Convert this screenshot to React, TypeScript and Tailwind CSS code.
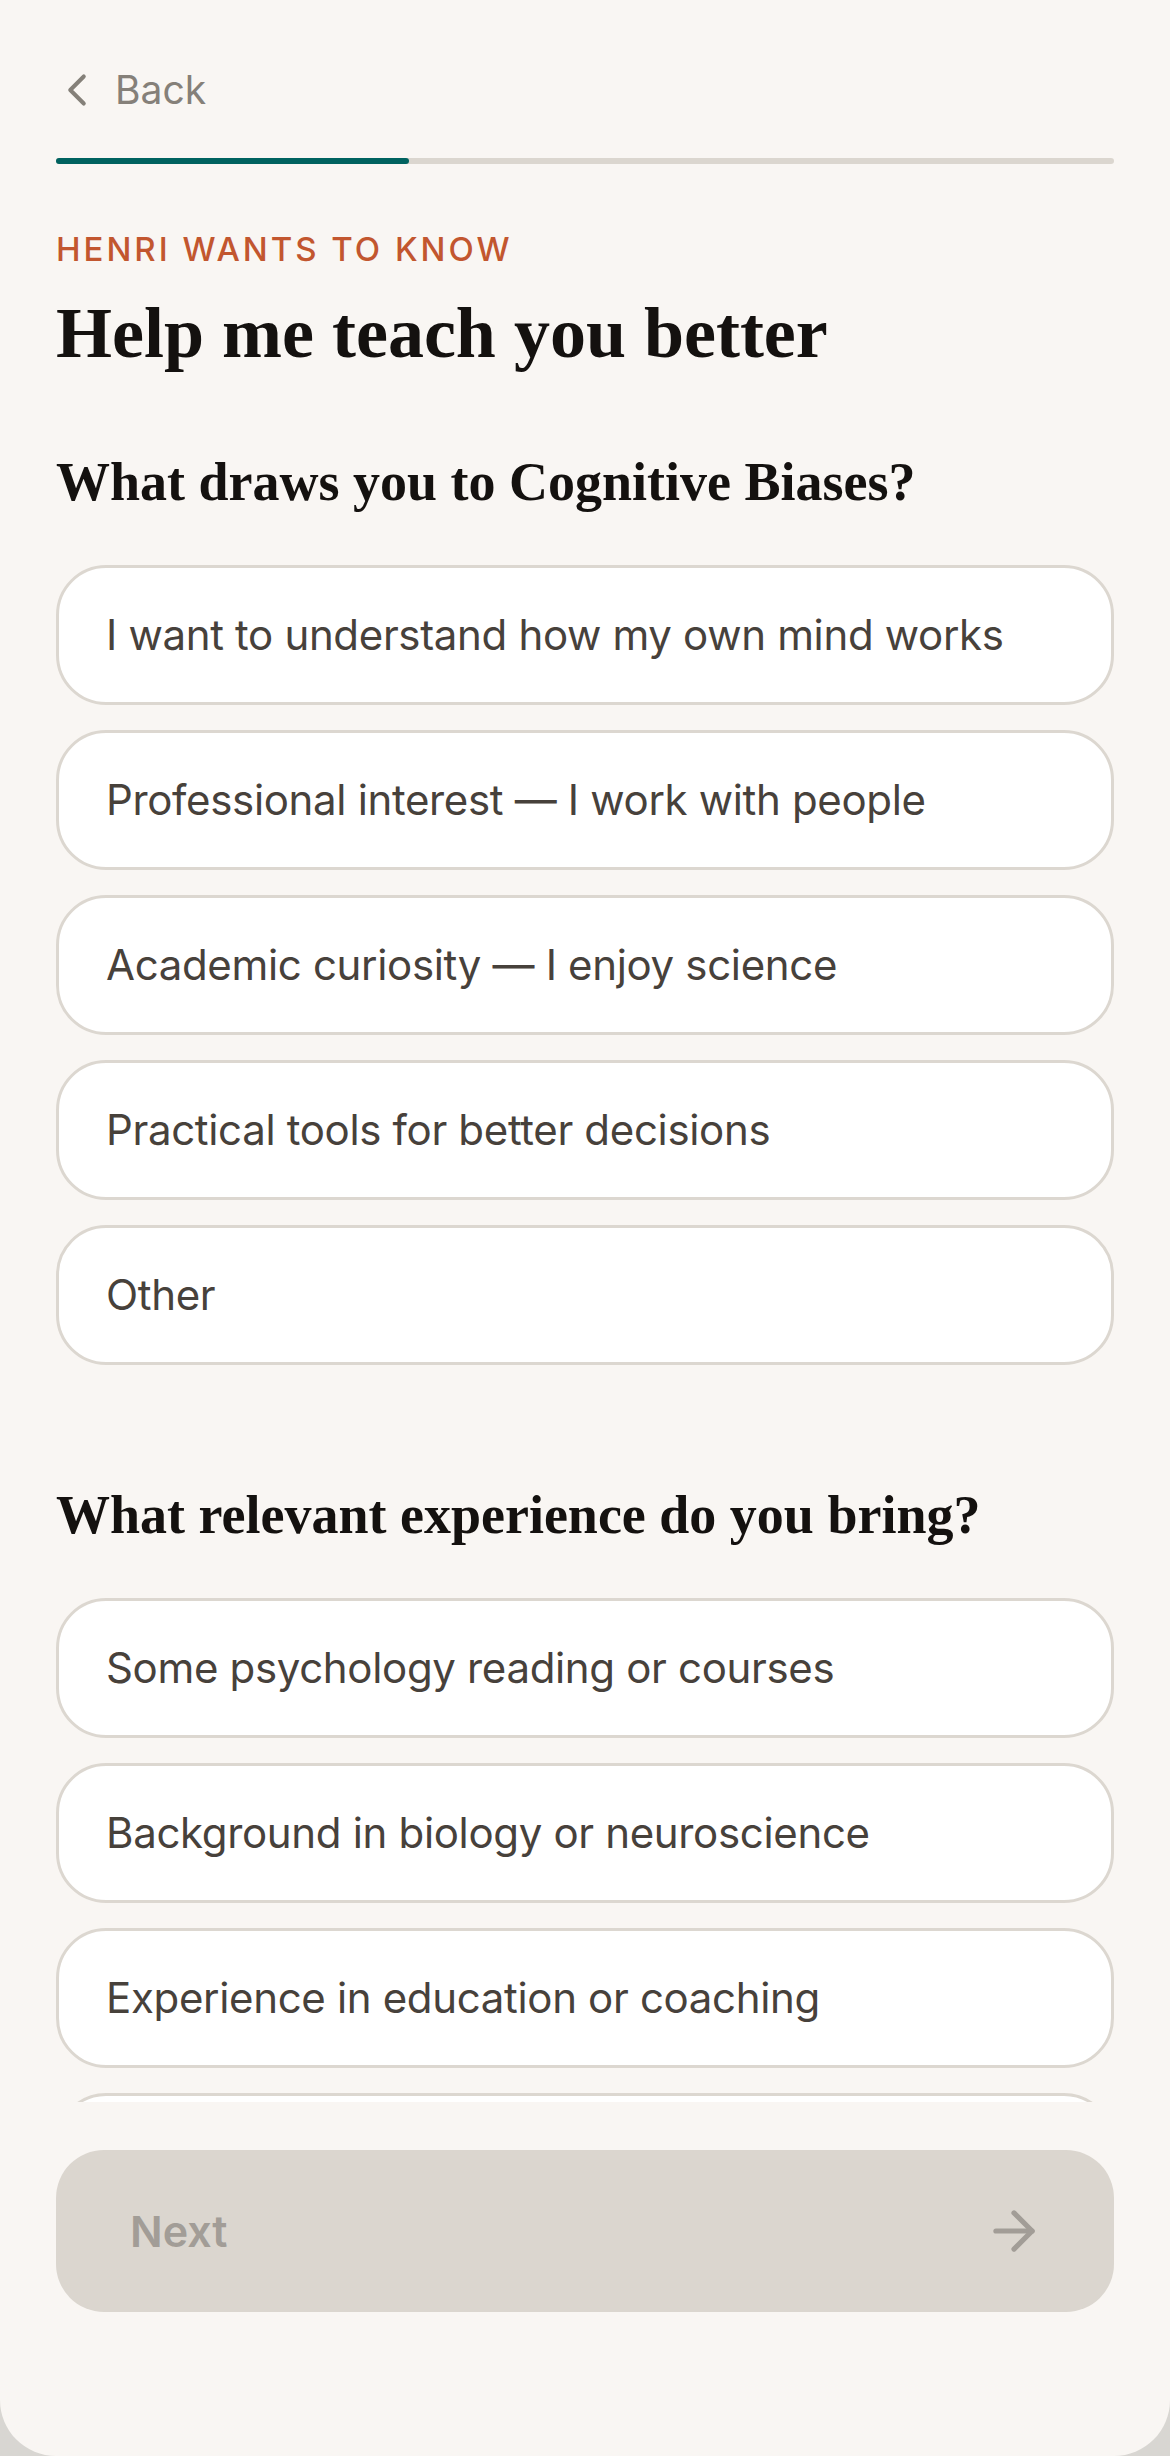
import { ArrowRight, ChevronLeft } from "lucide-react";

const sections = [
  {
    question: "What draws you to Cognitive Biases?",
    options: [
      "I want to understand how my own mind works",
      "Professional interest — I work with people",
      "Academic curiosity — I enjoy science",
      "Practical tools for better decisions",
      "Other",
    ],
  },
  {
    question: "What relevant experience do you bring?",
    options: [
      "Some psychology reading or courses",
      "Background in biology or neuroscience",
      "Experience in education or coaching",
      "None — I'm starting fresh",
    ],
  },
];

const sans = "font-['Inter',_'Noto_Sans',_sans-serif]";
const serif = "font-['Liberation_Serif',_'Times_New_Roman',_serif]";

function OptionCard({ label }: { label: string }) {
  return (
    <button
      type="button"
      className={`flex h-[140px] w-full shrink-0 items-center rounded-[50px] border-[3px] border-[#dcd7d0] bg-white pl-[47px] text-left text-[42px] leading-[52px] tracking-[-0.008em] text-[#47413b] ${sans}`}
    >
      {label}
    </button>
  );
}

export default function App() {
  return (
    <div className="h-[2456px] w-full bg-[#d8d6d2]">
      <main className="flex h-full w-full flex-col overflow-hidden rounded-b-[56px] bg-[#f9f6f3]">
        <div className="flex-1 overflow-hidden px-[56px]">
          <header className="pt-[66px]">
            <div className={`flex h-[48px] items-center gap-[15px] text-[39px] leading-[48px] text-[#858079] ${sans}`}>
              <ChevronLeft size={54} strokeWidth={1.8} className="-ml-[6px] -mr-[4px]" />
              <span>Back</span>
            </div>
            <div className="mt-[44px] h-[6px] w-full rounded-full bg-[#dbd6cf]">
              <div className="h-full w-1/3 rounded-full bg-[#00625f]" />
            </div>
          </header>

          <p className={`mt-[65px] text-[33px] font-medium uppercase leading-[40px] tracking-[0.09em] text-[#c2562f] ${sans}`}>
            Henri wants to know
          </p>
          <h1 className={`mt-[21px] text-[72px] font-bold leading-[86px] text-[#14110f] ${serif}`}>
            Help me teach you better
          </h1>

          {sections.map((section, index) => (
            <section key={section.question} className={index === 0 ? "mt-[71px]" : "mt-[115px]"}>
              <h2 className={`text-[54px] font-bold leading-[70px] text-[#14110f] ${serif}`}>
                {section.question}
              </h2>
              <div className="mt-[48px] flex flex-col gap-[25px]">
                {section.options.map((option) => (
                  <OptionCard key={option} label={option} />
                ))}
              </div>
            </section>
          ))}
        </div>

        <footer className="shrink-0 px-[56px] pb-[144px] pt-[48px]">
          <button
            type="button"
            disabled
            className={`flex h-[162px] w-full items-center justify-between rounded-[48px] bg-[#dbd6cf] pl-[74px] pr-[69px] text-[43px] font-semibold text-[#a29d97] ${sans}`}
          >
            <span>Next</span>
            <ArrowRight size={62} strokeWidth={2} />
          </button>
        </footer>
      </main>
    </div>
  );
}
